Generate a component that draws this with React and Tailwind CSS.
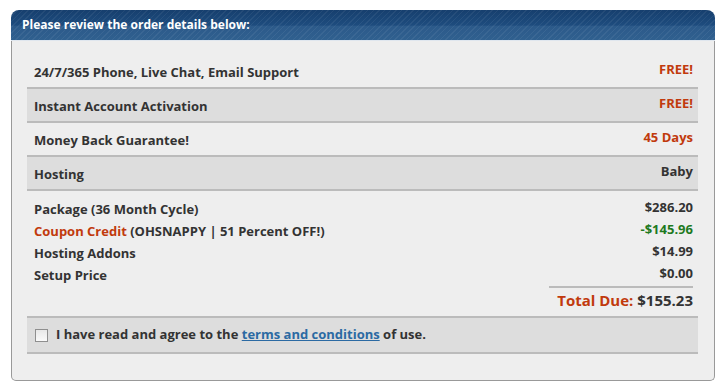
import React from "react";

const stripes =
  "repeating-linear-gradient(135deg, rgba(255,255,255,0.06) 0px, rgba(255,255,255,0.06) 1px, transparent 1px, transparent 4px)";

function Row({ label, value, shaded, valueClass = "text-[#c13a0d]" }) {
  return (
    <div
      className={`flex justify-between items-start h-[34px] pl-[7px] pr-[5px] border-b-2 border-[#bbbbbb] ${
        shaded ? "bg-[#dddddd]" : "bg-[#eeeeee]"
      }`}
    >
      <span className="pt-[8px]">{label}</span>
      <span className={`pt-[5px] ${valueClass}`}>{value}</span>
    </div>
  );
}

export default function App() {
  return (
    <div
      className="w-[728px] h-[387px] bg-white pt-[10px] pl-[11px] text-[13px] font-bold text-[#333333]"
      style={{ fontFamily: '"Open Sans", "Liberation Sans", sans-serif' }}
    >
      <div className="w-[704px]">
        <div
          className="h-[31px] rounded-t-[8px] flex items-center pl-[11px] text-white text-[12px] font-bold border-b border-[#dfe6ee]"
          style={{
            backgroundImage: `${stripes}, linear-gradient(#163f6e, #1e4c7e 50%, #2c5a8a 55%, #30608f)`,
          }}
        >
          Please review the order details below:
        </div>
        <div className="bg-[#eeeeee] border border-t-0 border-[#999999] rounded-b-[5px] pt-[14px] pb-[26px] pl-[15px] pr-[16px]">
          <div>
            <Row label="24/7/365 Phone, Live Chat, Email Support" value="FREE!" />
            <Row label="Instant Account Activation" value="FREE!" shaded />
            <Row label="Money Back Guarantee!" value="45 Days" />
            <Row
              label="Hosting"
              value="Baby"
              shaded
              valueClass="text-[#333333]"
            />
          </div>
          <div className="flex justify-between pl-[7px] pr-[5px] pt-[5px]">
            <div className="flex flex-col leading-[22px] pt-[2px]">
              <span>Package (36 Month Cycle)</span>
              <span>
                <span className="text-[#c13a0d]">Coupon Credit</span>{" "}
                (OHSNAPPY | 51 Percent OFF!)
              </span>
              <span>Hosting Addons</span>
              <span>Setup Price</span>
            </div>
            <div className="flex flex-col items-end leading-[22px]">
              <span>$286.20</span>
              <span className="text-[#1e7a1e]">-$145.96</span>
              <span>$14.99</span>
              <span>$0.00</span>
              <div className="w-[144px] border-t-2 border-[#bbbbbb] mt-[2px] pt-[1px] text-[15px] leading-[22px] text-right">
                <span className="text-[#c13a0d]">Total Due:</span> $155.23
              </div>
            </div>
          </div>
          <div className="mt-[5px] border-t-2 border-b-2 border-[#bbbbbb] bg-[#dddddd] h-[38px] flex items-center px-[8px] gap-[8px]">
            <span className="w-[13px] h-[13px] border border-[#8f8f8f] bg-gradient-to-b from-[#e8e8e8] to-[#fafafa] shrink-0" />
            <span>
              I have read and agree to the{" "}
              <a href="#" className="underline text-[#2b6aa3]">
                terms and conditions
              </a>{" "}
              of use.
            </span>
          </div>
        </div>
      </div>
    </div>
  );
}
